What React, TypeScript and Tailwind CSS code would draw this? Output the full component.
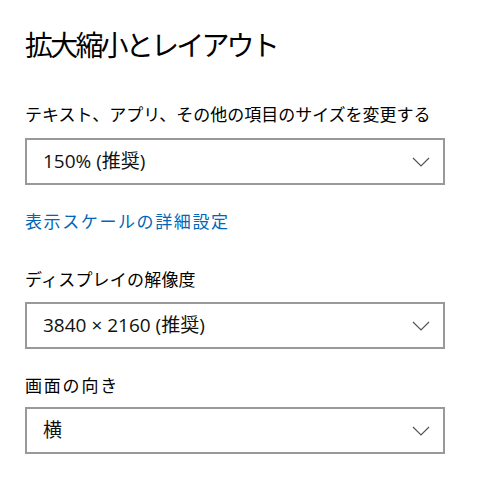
const font = { fontFamily: '"Noto Sans CJK JP", "Noto Sans", sans-serif' }
const valueFont = { fontFamily: '"Open Sans", "Noto Sans CJK JP", sans-serif' }

function Chevron() {
  return (
    <svg width="18" height="10" viewBox="0 0 18 10" className="shrink-0">
      <path d="M1 1 L9 9 L17 1" fill="none" stroke="#555" strokeWidth="1.2" />
    </svg>
  )
}

function Select({ value }: { value: string }) {
  return (
    <div className="flex items-center justify-between w-[420px] h-[47px] border-2 border-[#999999] bg-white pl-[16px] pr-[13px]">
      <span className="text-[19px] text-[#111] leading-none" style={valueFont}>{value}</span>
      <Chevron />
    </div>
  )
}

export default function App() {
  return (
    <div className="w-[494px] h-[489px] bg-white pl-[25px] pt-[30px] text-black" style={font}>
      <h1 className="text-[28px] leading-none font-normal tracking-[-2.8px]">拡大縮小とレイアウト</h1>

      <div className="mt-[47px] text-[17px] leading-none">テキスト、アプリ、その他の項目のサイズを変更する</div>
      <div className="mt-[16px]">
        <Select value="150% (推奨)" />
      </div>

      <div className="mt-[27px] text-[17px] leading-none tracking-[1.6px] text-[#0067b8]">表示スケールの詳細設定</div>

      <div className="mt-[41px] text-[17px] leading-none tracking-[0.2px]">ディスプレイの解像度</div>
      <div className="mt-[15px]">
        <Select value="3840 × 2160 (推奨)" />
      </div>

      <div className="mt-[27px] text-[17px] leading-none tracking-[1.8px]">画面の向き</div>
      <div className="mt-[14px]">
        <Select value="横" />
      </div>
    </div>
  )
}
